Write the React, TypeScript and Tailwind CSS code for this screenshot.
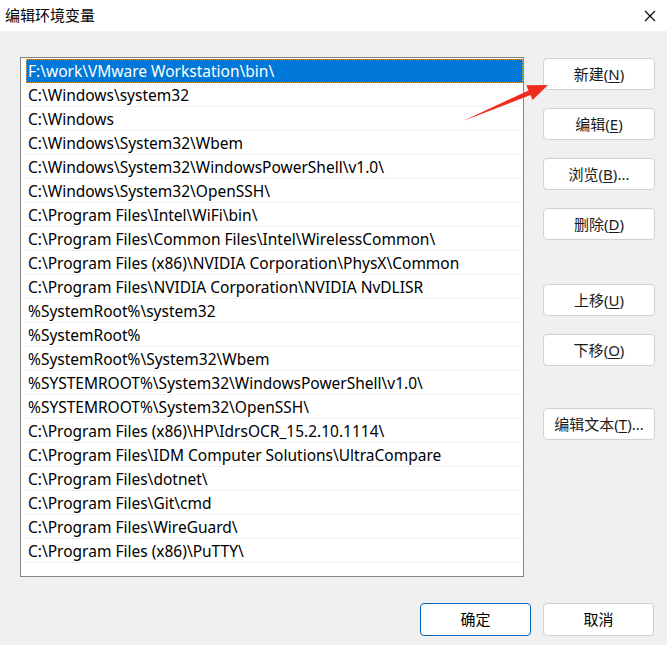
import React from "react";

const paths = [
  "F:\\work\\VMware Workstation\\bin\\",
  "C:\\Windows\\system32",
  "C:\\Windows",
  "C:\\Windows\\System32\\Wbem",
  "C:\\Windows\\System32\\WindowsPowerShell\\v1.0\\",
  "C:\\Windows\\System32\\OpenSSH\\",
  "C:\\Program Files\\Intel\\WiFi\\bin\\",
  "C:\\Program Files\\Common Files\\Intel\\WirelessCommon\\",
  "C:\\Program Files (x86)\\NVIDIA Corporation\\PhysX\\Common",
  "C:\\Program Files\\NVIDIA Corporation\\NVIDIA NvDLISR",
  "%SystemRoot%\\system32",
  "%SystemRoot%",
  "%SystemRoot%\\System32\\Wbem",
  "%SYSTEMROOT%\\System32\\WindowsPowerShell\\v1.0\\",
  "%SYSTEMROOT%\\System32\\OpenSSH\\",
  "C:\\Program Files (x86)\\HP\\IdrsOCR_15.2.10.1114\\",
  "C:\\Program Files\\IDM Computer Solutions\\UltraCompare",
  "C:\\Program Files\\dotnet\\",
  "C:\\Program Files\\Git\\cmd",
  "C:\\Program Files\\WireGuard\\",
  "C:\\Program Files (x86)\\PuTTY\\",
];

function Btn({ label, k, rest, className = "" }: { label: string; k: string; rest?: string; className?: string }) {
  return (
    <div
      className={
        "w-[112px] h-[32px] bg-white border border-[#d0d0d0] rounded-[4px] flex items-center justify-center text-[15px] text-[#1a1a1a] " +
        className
      }
    >
      <span>
        {label}(<span className="underline underline-offset-2">{k}</span>){rest}
      </span>
    </div>
  );
}

export default function App() {
  return (
    <div
      className="relative w-[667px] h-[645px] bg-[#f0f0f0] flex flex-col overflow-hidden"
      style={{ fontFamily: '"Noto Sans", "Noto Sans CJK SC", sans-serif' }}
    >
      <div className="h-[31px] bg-white flex items-center justify-between pl-[5px] pr-[10px]">
        <span className="text-[15px] text-black" style={{ fontFamily: '"Noto Sans CJK SC", sans-serif' }}>
          编辑环境变量
        </span>
        <svg width="12" height="12" viewBox="0 0 12 12" className="mr-[1px]">
          <path d="M1 1 L11 11 M11 1 L1 11" stroke="#000" strokeWidth="1.1" />
        </svg>
      </div>

      <div className="flex pl-[20px] pt-[26px]">
        <div className="w-[504px] h-[520px] bg-white border border-[#848484] pl-[5px] pt-[1px] flex flex-col">
          {paths.map((p, i) => (
            <div
              key={i}
              className={
                "h-[24px] shrink-0 flex items-center pl-[2px] pt-[2px] text-[15.5px] whitespace-nowrap " +
                (i === 0
                  ? "bg-[#0078d7] text-white outline-1 outline-dotted outline-[#f0a040] -outline-offset-1"
                  : "text-black border-b border-[#f0f0f0]")
              }
            >
              {p}
            </div>
          ))}
        </div>

        <div className="ml-[19px] pt-[1px] flex flex-col">
          <Btn label="新建" k="N" />
          <Btn label="编辑" k="E" className="mt-[18px]" />
          <Btn label="浏览" k="B" rest="..." className="mt-[18px]" />
          <Btn label="删除" k="D" className="mt-[18px]" />
          <Btn label="上移" k="U" className="mt-[44px]" />
          <Btn label="下移" k="O" className="mt-[18px]" />
          <Btn label="编辑文本" k="T" rest="..." className="mt-[42px]" />
        </div>
      </div>

      <div className="flex justify-end gap-[12px] pr-[13px] pt-[26px]">
        <div className="w-[111px] h-[33px] bg-white border border-[#0067c0] rounded-[4px] flex items-center justify-center text-[15px] text-black">
          确定
        </div>
        <div className="w-[111px] h-[33px] bg-white border border-[#d0d0d0] rounded-[4px] flex items-center justify-center text-[15px] text-black">
          取消
        </div>
      </div>

      <svg className="absolute left-0 top-0 pointer-events-none" width="667" height="645">
        <polygon
          points="463,121 530.5,95 532.6,100.1 548,85 526.4,85.3 528.5,90.4"
          fill="#f02a1e"
        />
      </svg>
    </div>
  );
}
